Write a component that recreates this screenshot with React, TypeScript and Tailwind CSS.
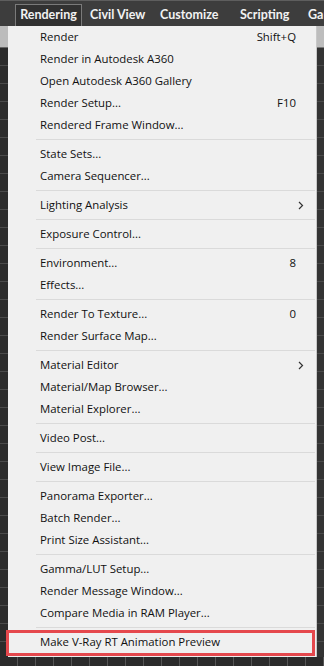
import React from 'react';

type Entry =
  | { label: string; shortcut?: string; submenu?: boolean }
  | 'sep';

const entries: Entry[] = [
  { label: 'Render', shortcut: 'Shift+Q' },
  { label: 'Render in Autodesk A360' },
  { label: 'Open Autodesk A360 Gallery' },
  { label: 'Render Setup...', shortcut: 'F10' },
  { label: 'Rendered Frame Window...' },
  'sep',
  { label: 'State Sets...' },
  { label: 'Camera Sequencer...' },
  'sep',
  { label: 'Lighting Analysis', submenu: true },
  'sep',
  { label: 'Exposure Control...' },
  'sep',
  { label: 'Environment...', shortcut: '8' },
  { label: 'Effects...' },
  'sep',
  { label: 'Render To Texture...', shortcut: '0' },
  { label: 'Render Surface Map...' },
  'sep',
  { label: 'Material Editor', submenu: true },
  { label: 'Material/Map Browser...' },
  { label: 'Material Explorer...' },
  'sep',
  { label: 'Video Post...' },
  'sep',
  { label: 'View Image File...' },
  'sep',
  { label: 'Panorama Exporter...' },
  { label: 'Batch Render...' },
  { label: 'Print Size Assistant...' },
  'sep',
  { label: 'Gamma/LUT Setup...' },
  { label: 'Render Message Window...' },
  { label: 'Compare Media in RAM Player...' },
  'sep',
  { label: 'Make V-Ray RT Animation Preview' },
];

const menus = [
  { label: 'Civil View', w: 'w-[70px]' },
  { label: 'Customize', w: 'w-[80px]' },
  { label: 'Scripting', w: 'w-[68px]' },
  { label: 'Gar', w: 'w-[40px]' },
];

export default function App() {
  return (
    <div className="relative w-[324px] h-[666px] overflow-hidden bg-[#2d2d2d] font-['Open_Sans',sans-serif] text-[#111]">
      {/* top menu bar */}
      <div className="flex h-[26px] pt-[3px] items-stretch bg-[#3d3d3d] border-t border-[#5e5e5e] font-['Lato',sans-serif] text-[12.5px] font-bold text-[#f2f2f2] whitespace-nowrap">
        <div className="w-[15px] shrink-0" />
        <div className="flex items-center justify-center w-[67px] shrink-0 bg-[#313131] border border-b-0 border-[#7a7a7a]">Rendering</div>
        {menus.map((m) => (
          <div key={m.label} className={`flex items-center pl-[8px] shrink-0 ${m.w}`}>{m.label}</div>
        ))}
      </div>

      <div className="flex h-[631px]">
        {/* viewport strip on the left */}
        <div className="w-[8px] shrink-0 flex flex-col">
          <div className="h-[22px] bg-[#bcbcbc] border-b border-[#666]" />
          <div className="flex-1 bg-[#2b2b2b] bg-[repeating-linear-gradient(to_bottom,transparent_0px,transparent_17px,#4a4a4a_17px,#4a4a4a_18px)]" />
        </div>

        {/* dropdown panel */}
        <div className="flex flex-col w-[309px] shrink-0 h-[631px] bg-[#f0f0f0] border-r border-[#c8c8c8]">
          {entries.map((e, i) =>
            e === 'sep' ? (
              <div key={i} className="h-[7px] flex items-center pl-[28px] pr-[1px]">
                <div className="h-[1px] w-full bg-[#dadada]" />
              </div>
            ) : (
              <div key={i} className="flex items-center h-[22px] pl-[32px] pr-[12px] text-[11.4px] leading-none whitespace-nowrap">
                <span className="flex-1">{e.label}</span>
                {e.shortcut && <span className="pr-[8px]">{e.shortcut}</span>}
                {e.submenu && (
                  <svg width="6" height="9" viewBox="0 0 6 9">
                    <path d="M1 1 L4.5 4.5 L1 8" fill="none" stroke="#333" strokeWidth="1.2" />
                  </svg>
                )}
              </div>
            )
          )}
        </div>

        {/* right strip */}
        <div className="flex-1 flex flex-col">
          <div className="h-[22px] bg-[#bdbdbd] border-b border-[#777]" />
          <div className="flex-1 bg-[#333] bg-[repeating-linear-gradient(to_bottom,transparent_0px,transparent_17px,#4a4a4a_17px,#4a4a4a_18px)]" />
        </div>
      </div>

      {/* bottom viewport grid */}
      <div className="absolute left-0 right-0 bottom-0 h-[9px] bg-[#2b2b2b] bg-[repeating-linear-gradient(to_right,transparent_0px,transparent_17px,#555_17px,#555_18px)]" />

      {/* highlight annotation */}
      <div className="absolute left-[6px] top-[630px] w-[309px] h-[26px] border-[3px] border-[#e5484d]" />
    </div>
  );
}
